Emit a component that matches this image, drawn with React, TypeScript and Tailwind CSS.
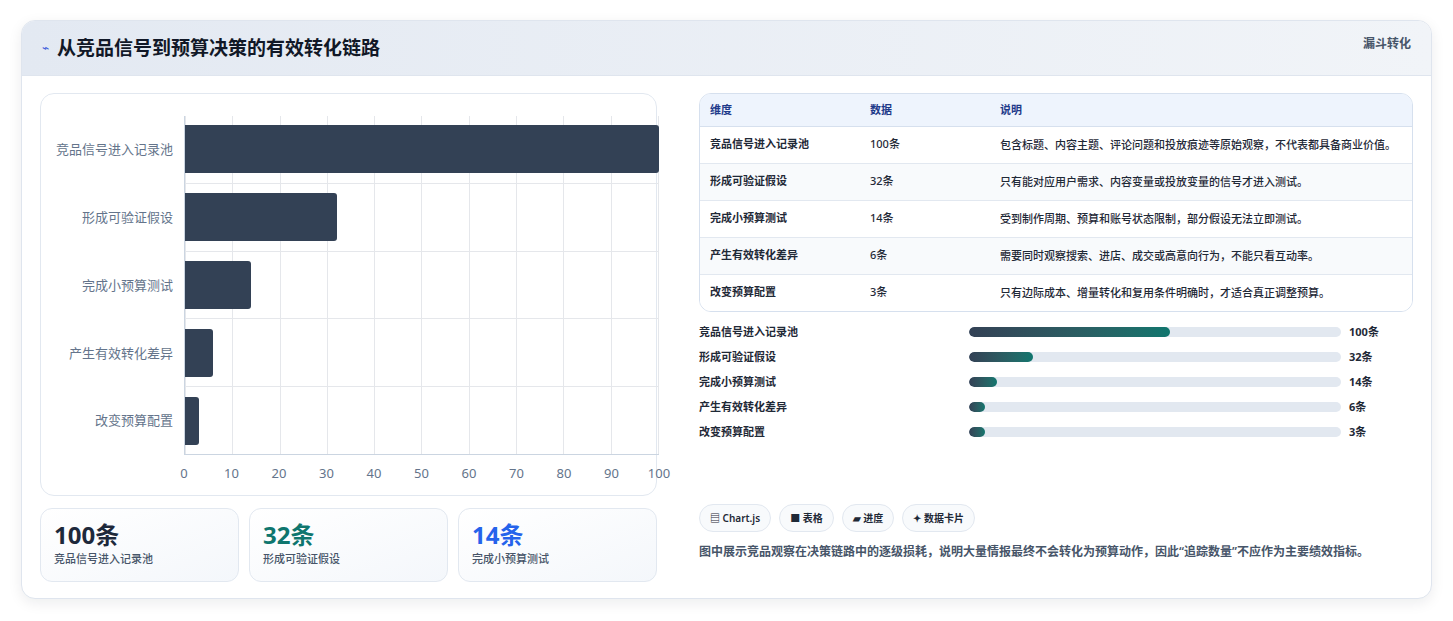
import React from "react";

const rows = [
  { n: "竞品信号进入记录池", v: 100, d: "包含标题、内容主题、评论问题和投放痕迹等原始观察，不代表都具备商业价值。" },
  { n: "形成可验证假设", v: 32, d: "只有能对应用户需求、内容变量或投放变量的信号才进入测试。" },
  { n: "完成小预算测试", v: 14, d: "受到制作周期、预算和账号状态限制，部分假设无法立即测试。" },
  { n: "产生有效转化差异", v: 6, d: "需要同时观察搜索、进店、成交或高意向行为，不能只看互动率。" },
  { n: "改变预算配置", v: 3, d: "只有边际成本、增量转化和复用条件明确时，才适合真正调整预算。" },
];
const ticks = [0, 10, 20, 30, 40, 50, 60, 70, 80, 90, 100];

export default function App() {
  return (
    <div className="w-[1453px] h-[621px] bg-white pt-[20px] px-[21px]" style={{ fontFamily: '"Noto Sans", "Noto Sans CJK SC", sans-serif' }}>
      <div className="w-[1411px] h-[579px] rounded-[14px] border border-[#dfe5ee] shadow-[0_4px_14px_rgba(15,23,42,0.08)] bg-white overflow-hidden">
        <div className="h-[55px] bg-gradient-to-r from-[#e3e9f2] to-[#f1f4f8] border-b border-[#dfe5ee] flex items-center justify-between px-[20px]">
          <div className="flex items-center gap-[8px]">
            <span className="text-[#3b5bdb] text-[12px]">⌁</span>
            <span className="text-[19px] font-bold text-[#111827]">从竞品信号到预算决策的有效转化链路</span>
          </div>
          <span className="text-[12px] font-semibold text-[#475569] self-start mt-[14px]">漏斗转化</span>
        </div>
        <div className="flex gap-[42px] px-[18px] pt-[17px]">
          <div className="w-[617px] flex flex-col gap-[12px]">
            <div className="h-[403px] rounded-[14px] border border-[#e2e8f0] relative">
              <div className="absolute left-[143px] top-[22px] w-[475px] h-[339px] border-l border-b border-[#cbd5e1]">
                <div className="absolute inset-0 flex justify-between">
                  {ticks.map((t) => <div key={t} className="w-px h-full bg-[#e5e7eb]" />)}
                </div>
                <div className="absolute inset-0 flex flex-col">
                  {rows.map((r, i) => (
                    <div key={i} className={`flex-1 flex items-center ${i ? "border-t border-[#e5e7eb]" : ""}`}>
                      <div className="h-[48px] bg-[#334155] rounded-r-[3px] z-10" style={{ width: `${r.v}%` }} />
                    </div>
                  ))}
                </div>
              </div>
              <div className="absolute left-0 top-[22px] w-[132px] h-[339px] flex flex-col">
                {rows.map((r, i) => (
                  <div key={i} className="flex-1 flex items-center justify-end text-[13px] text-[#64748b]">{r.n}</div>
                ))}
              </div>
              <div className="absolute left-[143px] top-[370px] w-[475px] flex justify-between text-[13px] text-[#64748b]">
                {ticks.map((t) => <span key={t} className="w-0 flex justify-center">{t}</span>)}
              </div>
            </div>
            <div className="flex gap-[10px]">
              {[["100条", "text-[#1e293b]", "竞品信号进入记录池"], ["32条", "text-[#0f766e]", "形成可验证假设"], ["14条", "text-[#2563eb]", "完成小预算测试"]].map(([a, c, b]) => (
                <div key={a} className="flex-1 h-[74px] rounded-[12px] border border-[#e2e8f0] bg-gradient-to-br from-white to-[#f4f7fb] px-[13px] pt-[10px]">
                  <div className={`text-[24px] leading-[32px] font-bold ${c}`}>{a}</div>
                  <div className="text-[11px] text-[#475569] font-medium">{b}</div>
                </div>
              ))}
            </div>
          </div>
          <div className="w-[714px] flex flex-col">
            <div className="rounded-[12px] border border-[#d6e0ee] overflow-hidden text-[11px] text-[#1f2937]">
              <div className="flex h-[33px] items-center bg-[#eef4fd] border-b border-[#d6e0ee] font-semibold text-[#1e3a8a]">
                <div className="w-[170px] pl-[10px]">维度</div><div className="w-[130px]">数据</div><div>说明</div>
              </div>
              {rows.map((r, i) => (
                <div key={i} className={`flex py-[9px] ${i ? "border-t border-[#e2e8f0]" : ""} ${i % 2 ? "bg-[#f8fafc]" : "bg-white"}`}>
                  <div className="w-[170px] pl-[10px] font-semibold">{r.n}</div>
                  <div className="w-[130px] font-medium">{r.v}条</div>
                  <div className="flex-1 pr-[14px] leading-[18px] font-medium">{r.d}</div>
                </div>
              ))}
            </div>
            <div className="flex flex-col gap-[7px] mt-[11px]">
              {rows.map((r, i) => (
                <div key={i} className="flex items-center h-[18px] text-[11px] font-semibold text-[#1f2937]">
                  <div className="w-[270px]">{r.n}</div>
                  <div className="w-[372px] h-[10px] rounded-full bg-[#e2e8f0] overflow-hidden">
                    <div className="h-full rounded-full bg-gradient-to-r from-[#334155] to-[#0f766e]" style={{ width: `${Math.max(r.v * 0.54, 4.3)}%` }} />
                  </div>
                  <div className="pl-[8px] font-bold">{r.v}条</div>
                </div>
              ))}
            </div>
            <div className="flex gap-[8px] mt-[63px]">
              {["▤ Chart.js", "■ 表格", "▰ 进度", "✦ 数据卡片"].map((t) => (
                <span key={t} className="h-[28px] px-[10px] rounded-full border border-[#e2e8f0] bg-[#f8fafc] text-[10px] font-semibold text-[#1f2937] flex items-center">{t}</span>
              ))}
            </div>
            <p className="mt-[11px] text-[12px] leading-[18px] text-[#475569] font-semibold">图中展示竞品观察在决策链路中的逐级损耗，说明大量情报最终不会转化为预算动作，因此“追踪数量”不应作为主要绩效指标。</p>
          </div>
        </div>
      </div>
    </div>
  );
}
